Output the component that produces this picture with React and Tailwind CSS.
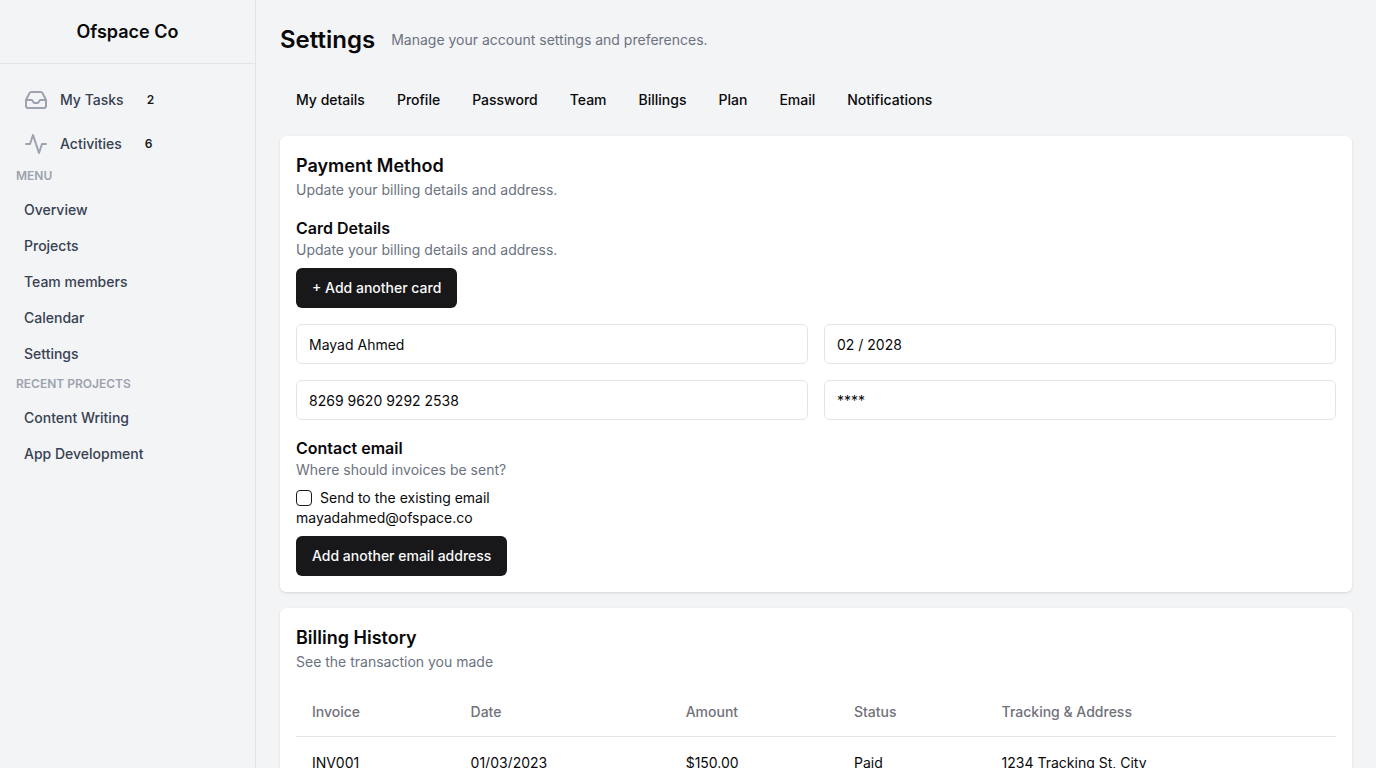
import React from "react";

const tasks = [
  { label: "My Tasks", count: 2, Icon: InboxIcon },
  { label: "Activities", count: 6, Icon: ActivityIcon },
];
const menu = ["Overview", "Projects", "Team members", "Calendar", "Settings"];
const projects = ["Content Writing", "App Development"];
const tabs = ["My details", "Profile", "Password", "Team", "Billings", "Plan", "Email", "Notifications"];
const columns = ["Invoice", "Date", "Amount", "Status", "Tracking & Address"];
const invoices = [["INV001", "01/03/2023", "$150.00", "Paid", "1234 Tracking St, City"]];

function IconBase({ children }) {
  return (
    <svg
      viewBox="0 0 24 24"
      fill="none"
      stroke="currentColor"
      strokeWidth="2"
      strokeLinecap="round"
      strokeLinejoin="round"
      aria-hidden="true"
      className="h-6 w-6 shrink-0 text-[#9ca3af]"
    >
      {children}
    </svg>
  );
}

function InboxIcon() {
  return (
    <IconBase>
      <polyline points="22 12 16 12 14 15 10 15 8 12 2 12" />
      <path d="M5.45 5.11 2 12v6a2 2 0 0 0 2 2h16a2 2 0 0 0 2-2v-6l-3.45-6.89A2 2 0 0 0 16.76 4H7.24a2 2 0 0 0-1.79 1.11z" />
    </IconBase>
  );
}

function ActivityIcon() {
  return (
    <IconBase>
      <path d="M22 12h-4l-3 9L9 3l-3 9H2" />
    </IconBase>
  );
}

function NavSection({ title, items }) {
  return (
    <div className="flex flex-col gap-2">
      <h3 className="text-xs font-semibold uppercase text-[#9ca3af]">{title}</h3>
      <ul>
        {items.map((item) => (
          <li key={item}>
            <a href="#" className="block rounded-md p-2 text-sm font-medium text-[#374151] hover:bg-gray-200">
              {item}
            </a>
          </li>
        ))}
      </ul>
    </div>
  );
}

function Sidebar() {
  return (
    <aside className="flex w-64 shrink-0 flex-col border-r border-[#e4e4e7]">
      <div className="flex h-16 items-center justify-center border-b border-[#e4e4e7]">
        <h1 className="text-lg font-semibold">Ofspace Co</h1>
      </div>
      <nav className="flex flex-col gap-1 p-4">
        {tasks.map(({ label, count, Icon }) => (
          <a key={label} href="#" className="flex items-center gap-3 rounded-md p-2 hover:bg-gray-200">
            <Icon />
            <span className="text-sm font-medium text-[#374151]">{label}</span>
            <span className="rounded-full border border-transparent px-2.5 py-0.5 text-xs font-semibold text-[#18181b]">
              {count}
            </span>
          </a>
        ))}
        <NavSection title="Menu" items={menu} />
        <NavSection title="Recent Projects" items={projects} />
      </nav>
    </aside>
  );
}

function Card({ title, description, children }) {
  return (
    <section className="flex flex-col gap-4 rounded-md bg-white p-4 shadow-sm">
      <div>
        <h3 className="text-lg font-semibold">{title}</h3>
        <p className="text-sm text-[#6b7280]">{description}</p>
      </div>
      {children}
    </section>
  );
}

function Group({ title, description, children }) {
  return (
    <div className="flex flex-col items-start gap-2">
      <div>
        <h4 className="font-semibold">{title}</h4>
        <p className="text-sm text-[#6b7280]">{description}</p>
      </div>
      {children}
    </div>
  );
}

function PrimaryButton({ children }) {
  return (
    <button
      type="button"
      className="h-10 rounded-md bg-[#18181b] px-4 text-sm font-medium text-[#fafafa] hover:bg-[#27272a]"
    >
      {children}
    </button>
  );
}

function Field({ label, value }) {
  return (
    <input
      type="text"
      aria-label={label}
      defaultValue={value}
      className="h-10 w-full rounded-md border border-[#e4e4e7] bg-white px-3 py-2 text-sm"
    />
  );
}

export default function App() {
  return (
    <div className="flex h-screen bg-[#f3f4f6] font-['Inter',sans-serif] text-[#09090b]">
      <Sidebar />
      <main className="flex-1 overflow-y-auto p-6 [scrollbar-width:none]">
        <header className="flex items-center gap-4">
          <h2 className="text-2xl font-semibold">Settings</h2>
          <p className="text-sm text-[#6b7280]">Manage your account settings and preferences.</p>
        </header>
        <div className="mt-6 flex flex-wrap">
          {tabs.map((tab) => (
            <button
              key={tab}
              type="button"
              className="h-10 rounded-md px-4 text-sm font-medium hover:bg-gray-200"
            >
              {tab}
            </button>
          ))}
        </div>
        <div className="mt-4 flex flex-col gap-4">
          <Card title="Payment Method" description="Update your billing details and address.">
            <Group title="Card Details" description="Update your billing details and address.">
              <PrimaryButton>+ Add another card</PrimaryButton>
            </Group>
            <div className="grid grid-cols-2 gap-4">
              <Field label="Name on card" value="Mayad Ahmed" />
              <Field label="Expiry" value="02 / 2028" />
              <Field label="Card number" value="8269 9620 9292 2538" />
              <Field label="CVV" value="****" />
            </div>
            <Group title="Contact email" description="Where should invoices be sent?">
              <div className="text-sm">
                <div className="flex items-center gap-2">
                  <input
                    id="existing-email"
                    type="checkbox"
                    className="h-4 w-4 appearance-none rounded-sm border border-[#18181b] checked:bg-[#18181b]"
                  />
                  <label htmlFor="existing-email">Send to the existing email</label>
                </div>
                <p>mayadahmed@ofspace.co</p>
              </div>
              <PrimaryButton>Add another email address</PrimaryButton>
            </Group>
          </Card>
          <Card title="Billing History" description="See the transaction you made">
            <table className="w-full text-left text-sm">
              <thead>
                <tr className="border-b border-[#e4e4e7]">
                  {columns.map((column) => (
                    <th key={column} scope="col" className="h-12 px-4 align-middle font-medium text-[#71717a]">
                      {column}
                    </th>
                  ))}
                </tr>
              </thead>
              <tbody>
                {invoices.map((row) => (
                  <tr key={row[0]}>
                    {row.map((cell) => (
                      <td key={cell} className="p-4 align-middle">
                        {cell}
                      </td>
                    ))}
                  </tr>
                ))}
              </tbody>
            </table>
          </Card>
        </div>
      </main>
    </div>
  );
}
